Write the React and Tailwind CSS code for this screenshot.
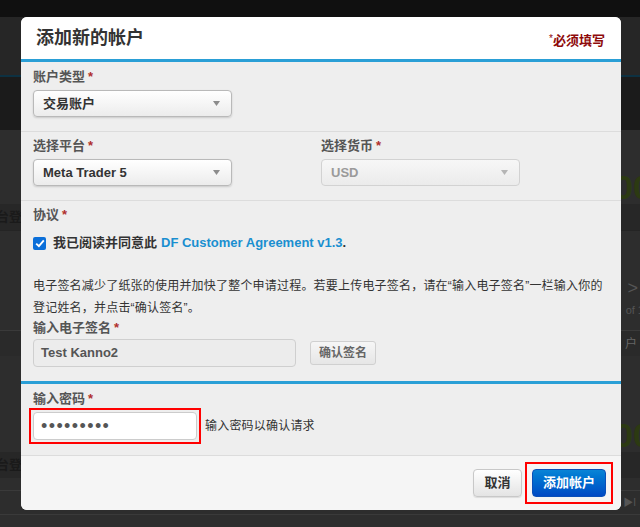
import React from 'react';

const cjk = { fontFamily: '"Liberation Sans", "Noto Sans CJK SC", sans-serif' };

function Req() {
    return <span className="text-[#b0302c] ml-[3px]">*</span>;
}

function Label({ children }) {
    return (
        <div className="text-[13px] leading-[18px] font-bold text-[#555]">
            {children}<Req />
        </div>
    );
}

function Caret({ light }) {
    return (
        <svg width="7" height="5" viewBox="0 0 7 5" className="shrink-0">
            <path d="M0 0 L7 0 L3.5 5 Z" fill={light ? '#b5b5b5' : '#8c8c8c'} />
        </svg>
    );
}

function Select({ value, disabled }) {
    return (
        <div
            className={
                'w-[199px] h-[27px] rounded-[4px] border flex items-center justify-between pl-[9px] pr-[11px] text-[13px] font-bold ' +
                (disabled
                    ? 'border-[#d2d2d2] bg-gradient-to-b from-[#f7f7f7] to-[#ebebeb] text-[#9a9a9a]'
                    : 'border-[#b9b9b9] bg-gradient-to-b from-white to-[#ececec] text-[#333] shadow-[0_1px_2px_rgba(0,0,0,0.15)]')
            }
        >
            <span>{value}</span>
            <Caret light={disabled} />
        </div>
    );
}

function Backdrop() {
    return (
        <div className="w-[640px] h-[527px] bg-[#2d2d2d] flex flex-col overflow-hidden">
            <div className="h-[17px] bg-[#101010]" />
            <div className="h-[58px] bg-[#262626]" />
            <div className="h-[2px] bg-[#0d3142]" />
            <div className="h-[53px] bg-[#1b1b1b]" />
            <div className="h-[74px] bg-[#2d2d2d] flex justify-end items-center pt-[40px]">
                <span className="text-[34px] font-bold text-[#2c3a12] mr-[-12px]">00</span>
            </div>
            <div className="h-[26px] bg-[#272727] flex items-center">
                <span className="text-[13px] font-bold text-[#1a1a1a] ml-[-4px]">台登录</span>
            </div>
            <div className="h-[48px] border-t border-[#242424]" />
            <div className="h-[20px] flex justify-end items-center pr-[2px]">
                <span className="text-[18px] text-[#555]">&gt;</span>
            </div>
            <div className="h-[24px] flex justify-end items-center">
                <span className="text-[11px] text-[#555] mr-[-4px]">of 1</span>
            </div>
            <div className="h-[8px]" />
            <div className="h-[26px] border-t border-[#3a3a3a] flex justify-end items-center bg-[#2a2a2a]">
                <span className="text-[12px] text-[#666] mr-[3px]">户</span>
            </div>
            <div className="h-[64px]" />
            <div className="h-[30px] flex justify-end items-center">
                <span className="text-[34px] font-bold text-[#2c3a12] mr-[-12px]">00</span>
            </div>
            <div className="h-[2px]" />
            <div className="h-[26px] bg-[#272727] flex items-center">
                <span className="text-[13px] font-bold text-[#1a1a1a] ml-[-4px]">台登录</span>
            </div>
            <div className="h-[12px]" />
            <div className="h-[24px] border-t border-[#3a3a3a] flex justify-end items-center">
                <span className="text-[10px] text-[#555] mr-[4px]">▶I</span>
            </div>
            <div className="flex-1 bg-[#2e2e2e] border-t border-[#3a3a3a]" />
        </div>
    );
}

export default function App() {
    return (
        <div className="relative w-[640px] h-[527px] overflow-hidden" style={cjk}>
            <Backdrop />

            {/* modal window */}
            <div className="absolute left-[21px] top-[17px] w-[600px] h-[493px] rounded-[6px] overflow-hidden bg-[#eeeeee] flex flex-col">
                <div className="h-[42px] bg-white flex items-center justify-between pl-[15px] pr-[16px] shrink-0">
                    <h3 className="text-[18px] font-bold text-[#333] mt-[1px]">添加新的帐户</h3>
                    <span className="text-[13px] font-bold text-[#8e0a0a] mt-[6px]">
                        <span className="text-[10px] font-normal align-top">*</span>必须填写
                    </span>
                </div>
                <div className="h-[3px] bg-[#2a9fd6] shrink-0" />

                {/* account type */}
                <div className="px-[12px] pt-[6px] pb-[14px] border-b border-[#dcdcdc]">
                    <Label>账户类型</Label>
                    <div className="mt-[4px]">
                        <Select value="交易账户" />
                    </div>
                </div>

                {/* platform + currency */}
                <div className="px-[12px] pt-[5px] pb-[14px] border-b border-[#dcdcdc] grid grid-cols-2">
                    <div>
                        <Label>选择平台</Label>
                        <div className="mt-[4px]">
                            <Select value="Meta Trader 5" />
                        </div>
                    </div>
                    <div>
                        <Label>选择货币</Label>
                        <div className="mt-[4px]">
                            <Select value="USD" disabled />
                        </div>
                    </div>
                </div>

                {/* agreement + signature */}
                <div className="px-[12px] pt-[5px] pb-[14px]">
                    <Label>协议</Label>
                    <div className="mt-[10px] flex items-center h-[18px] text-[13px] font-bold">
                        <span className="w-[13px] h-[13px] rounded-[2px] bg-[#0b6fd9] flex items-center justify-center mr-[7px]">
                            <svg width="10" height="9" viewBox="0 0 10 9">
                                <path d="M1.2 4.6 L3.9 7.2 L8.8 1.4" fill="none" stroke="white" strokeWidth="1.9" />
                            </svg>
                        </span>
                        <span className="text-[#333]">我已阅读并同意此</span>
                        <span className="text-[#1a8fd0] ml-[4px]">DF Customer Agreement v1.3</span>
                        <span className="text-[#333]">.</span>
                    </div>
                    <p className="mt-[23px] text-[12px] tracking-[0.2px] leading-[22px] text-[#333]">
                        电子签名减少了纸张的使用并加快了整个申请过程。若要上传电子签名，请在“输入电子签名”一栏输入你的登记姓名，并点击“确认签名”。
                    </p>
                    <Label>输入电子签名</Label>
                    <div className="mt-[2px] flex items-center gap-[14px]">
                        <div className="w-[263px] h-[28px] rounded-[4px] border border-[#cfcfcf] bg-[#ececec] flex items-center pl-[7px] text-[13px] font-bold text-[#555]">
                            Test Kanno2
                        </div>
                        <button className="h-[24px] px-[8px] rounded-[3px] border border-[#d0d0d0] bg-gradient-to-b from-[#f6f6f6] to-[#e6e6e6] text-[12px] font-bold text-[#666]">
                            确认签名
                        </button>
                    </div>
                </div>
                <div className="h-[3px] bg-[#2a9fd6] shrink-0" />

                {/* password */}
                <div className="px-[8px] pt-[6px] pb-[11px] border-b border-[#dcdcdc]">
                    <div className="pl-[4px]">
                        <Label>输入密码</Label>
                    </div>
                    <div className="flex items-center">
                        <div className="border-2 border-[#ff0000] p-[2px]">
                            <input
                                type="password"
                                defaultValue="123456789"
                                readOnly
                                className="block w-[164px] h-[28px] rounded-[4px] border border-[#cccccc] bg-white pl-[7px] text-[18px] text-[#555] tracking-[1.4px] outline-none"
                            />
                        </div>
                        <span className="ml-[4px] text-[12px] tracking-[0.2px] text-[#333]">输入密码以确认请求</span>
                    </div>
                </div>

                {/* footer */}
                <div className="flex-1 bg-[#f5f5f5] flex items-center justify-end pr-[8px] pb-[1px]">
                    <button className="h-[28px] w-[49px] rounded-[4px] border border-[#c8c8c8] bg-gradient-to-b from-white to-[#e4e4e4] text-[13px] font-bold text-[#333] shadow-[0_1px_1px_rgba(0,0,0,0.1)]">
                        取消
                    </button>
                    <div className="ml-[3px] border-2 border-[#ff0000] p-[5px]">
                        <button className="block h-[28px] w-[74px] rounded-[4px] border border-[#0a4fb8] bg-gradient-to-b from-[#0a84d6] to-[#0049c4] text-[13px] font-bold text-white">
                            添加帐户
                        </button>
                    </div>
                </div>
            </div>
        </div>
    );
}
